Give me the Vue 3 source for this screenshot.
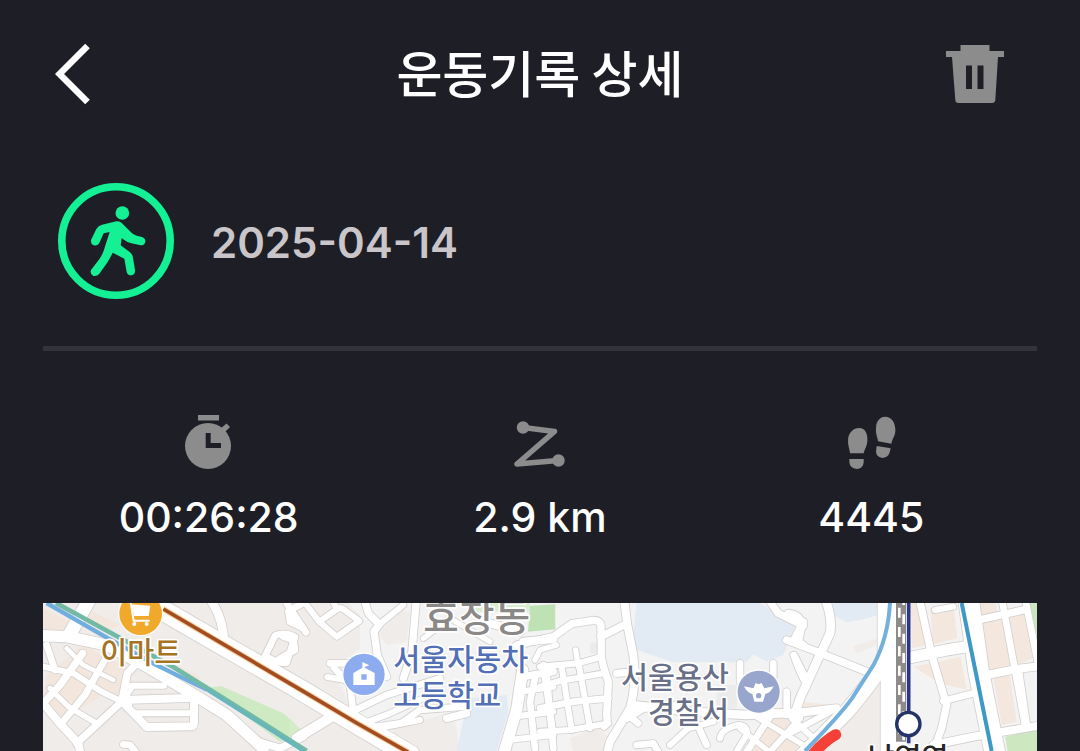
<template>
  <main class="page">
    <header class="header">
      <button class="icon-button back" type="button" aria-label="뒤로">
        <svg width="36" height="62" viewBox="0 0 36 62">
          <path d="M32.500 3L4.500 31L32.500 59" fill="none" stroke="#fff" stroke-width="6.500" />
        </svg>
      </button>
      <h1 class="title">운동기록 상세</h1>
      <button class="icon-button delete" type="button" aria-label="삭제">
        <svg width="58" height="58" viewBox="0 0 58 58">
          <path
            fill="#8c8c8c"
            fill-rule="evenodd"
            d="M14.500 0H43.500V6H58V12H52L49.300 55Q49 58 46 58H12.500Q9.500 58 9.300 55L6 12H0V6H14.500ZM20 20.500V44H26V20.500ZM31.500 20.500V44H37.500V20.500Z"
          />
        </svg>
      </button>
    </header>

    <section class="summary">
      <svg class="activity" width="116" height="116" viewBox="0 0 116 116">
        <circle cx="58" cy="58" r="54.200" fill="none" stroke="#14f195" stroke-width="7.600" />
        <g transform="translate(-18 -13) scale(0.33333)" fill="#14f195">
          <circle cx="247" cy="129" r="20.500" />
          <path
            d="M186 164L229 154Q239 152 246 160L273 187Q280 195 290 197L306 201Q317 205 316 215Q314 226 302 226L274 220Q261 217 253 210L245 204L242 226L269 246Q278 253 279 264L285 300Q286 313 275 316Q263 317 260 306L253 266L218 248Q212 261 203 276L178 311Q171 320 160 318Q149 313 153 300L179 266Q187 254 191 242L209 186L191 190L179 217Q173 229 161 226Q151 222 153 210L169 177Q175 167 186 164Z"
          />
        </g>
      </svg>
      <time class="date" datetime="2025-04-14">2025-04-14</time>
    </section>

    <hr class="divider" />

    <ul class="stats">
      <li class="stat">
        <svg width="54" height="54" viewBox="0 0 54 54">
          <g fill="#8c8c8c">
            <path d="M16 0H37V5.500H16Z" />
            <circle cx="26" cy="31" r="23" />
            <path d="M38 14L44.500 8.500L48 12L42 18Z" />
          </g>
          <path d="M26.200 18V30.500H39" fill="none" stroke="#1e1e26" stroke-width="5" />
        </svg>
        <span class="value">00:26:28</span>
      </li>
      <li class="stat">
        <svg width="54" height="54" viewBox="0 0 54 54">
          <path
            d="M10 12.500L41.500 16.500L4 49L45 45.500"
            fill="none"
            stroke="#8c8c8c"
            stroke-width="5.500"
            stroke-linecap="round"
            stroke-linejoin="round"
          />
          <circle cx="10" cy="12.500" r="6.200" fill="#8c8c8c" />
          <circle cx="45.500" cy="45.500" r="6.200" fill="#8c8c8c" />
        </svg>
        <span class="value">2.9 km</span>
      </li>
      <li class="stat">
        <svg width="54" height="54" viewBox="0 0 54 54">
          <g fill="#8c8c8c" transform="translate(-44.300 -15) scale(0.33333)">
            <path d="M151 160C149 144 144 135 145 119C146 98 161 84 179 84C196 84 204 100 203 123C202 139 195 146 192 160Z" />
            <path d="M149 177H192V187Q190 207 171 207Q151 206 149 187Z" />
            <path d="M235 124C234 111 227 103 229 83C230 62 241 50 256 50C275 50 287 67 287 91C287 109 278 115 275 131Z" />
            <path d="M231 138L273 145L270 157Q265 174 247 174Q229 171 229 154Z" />
          </g>
        </svg>
        <span class="value">4445</span>
      </li>
    </ul>

    <svg class="map" viewBox="9 24 2982 444" role="img" aria-label="운동 경로 지도">
      <rect x="0" y="0" width="3000" height="480" fill="#f4f3f3" />

      <path v-for="(area, i) in areas" :key="'area-' + i" :d="area.d" :fill="area.fill" />

      <!-- Road casings go under every road surface so that junctions stay open -->
      <g v-for="(block, i) in blocks" :key="'casing-' + i" :transform="`translate(${block.x} 0)`">
        <path
          v-for="(road, j) in block.roads"
          :key="j"
          class="casing"
          :d="road[1]"
          :stroke-width="road[0] + 5"
        />
      </g>
      <g v-for="(block, i) in blocks" :key="'road-' + i" :transform="`translate(${block.x} 0)`">
        <path
          v-for="(road, j) in block.roads"
          :key="j"
          class="road"
          :d="road[1]"
          :stroke-width="road[0]"
        />
      </g>

      <!-- Railways and subway lines -->
      <g fill="none">
        <path d="M20 24L190 122L345 208L500 284" stroke="#71aee0" stroke-width="13" />
        <path d="M48 24L235 126L400 216L500 278L640 366L800 468" stroke="#72b9a6" stroke-width="14" />
        <path d="M500 284L640 372L790 468" stroke="#67b5bd" stroke-width="10" />
        <path d="M370 42L790 289L950 384L1105 472" stroke="#f4ce9f" stroke-width="17" />
        <path d="M370 42L790 289L950 384L1105 472" stroke="#a34c20" stroke-width="11" />
        <path d="M2550 24Q2544 130 2500 211L2436 310Q2400 360 2295 468" stroke="#73b0dc" stroke-width="12" />
        <path d="M2765 24L2855 468" stroke="#3f98c7" stroke-width="12" />
        <path d="M2583 24V440" stroke="#8f8b88" stroke-width="30" />
        <path d="M2578 24V440" stroke="#fff" stroke-width="8" stroke-dasharray="30 28" stroke-dashoffset="44" />
        <path d="M2591 24V440" stroke="#fff" stroke-width="8" stroke-dasharray="30 28" stroke-dashoffset="24" />
        <path d="M2606 24V445" stroke="#2b3785" stroke-width="11" />
        <circle cx="2605" cy="387" r="35" fill="#fff" stroke="#243469" stroke-width="10" />
        <path d="M2387 419Q2355 437 2318 478" stroke="#f44138" stroke-width="33" stroke-linecap="round" />
      </g>

      <!-- Mart -->
      <circle cx="302" cy="56" r="68" fill="#fff" opacity="0.8" />
      <circle cx="302" cy="56" r="64" fill="#f0a92b" />
      <path d="M274 28L331 32L326 63H282Z" fill="#fff" />
      <path d="M262 22H272L281 77H329" fill="none" stroke="#fff" stroke-width="6" />
      <circle cx="283" cy="87" r="6" fill="#fff" />
      <circle cx="320" cy="87" r="6" fill="#fff" />

      <!-- School -->
      <circle cx="972" cy="238" r="66" fill="#fff" opacity="0.8" />
      <circle cx="972" cy="238" r="62" fill="#8dacf0" />
      <path d="M940 270V234L967 218V201L988 211L974 216V218L1004 234V270ZM964 238V254H980V238Z" fill="#fff" fill-rule="evenodd" />

      <!-- Police station -->
      <circle cx="2156" cy="290" r="67" fill="#fff" opacity="0.8" />
      <circle cx="2156" cy="290" r="63" fill="#98a5cc" />
      <path d="M2112 274L2140 280L2147 264L2156 268L2165 264L2173 280L2201 274Q2192 294 2176 297L2169 320H2143L2137 297Q2120 293 2112 274Z" fill="#fff" />
      <circle cx="2156" cy="302" r="8" fill="#98a5cc" />

      <text class="place mart" x="181" y="205">이마트</text>
      <text class="place town" x="1150" y="107">효창동</text>
      <text class="place school" x="1060" y="225">서울자동차</text>
      <text class="place school" x="1060" y="333">고등학교</text>
      <text class="place police" x="2067" y="278" text-anchor="end">서울용산</text>
      <text class="place police" x="2067" y="384" text-anchor="end">경찰서</text>
      <text class="place station" x="2604" y="523" text-anchor="middle">남영역</text>
    </svg>
  </main>
</template>

<script setup>
const areas = [
  { fill: '#f0ecea', d: 'M0 0H900L960 60V160L880 220L950 384L1100 480H0Z' },
  { fill: '#f3e7dd', d: 'M9 40L110 90L70 130L9 110ZM150 45L240 90L210 105L140 75Z' },
  { fill: '#f3e7dd', d: 'M20 240L130 150L260 220L240 320L190 300L70 370L10 310ZM370 190L490 250L460 255L390 220Z' },
  { fill: '#cdeac3', d: 'M495 278L545 274L730 355L790 410L720 440L640 380Z' },
  { fill: '#d4ecc8', d: 'M750 370L800 430L750 425Z' },
  { fill: '#f0ecea', d: 'M1010 110L1060 40L1110 50L1100 140L1040 150ZM1060 400L1240 350L1260 468H1060Z' },
  { fill: '#e2ebf3', d: 'M1284 310L1400 300L1405 350L1370 468H1250Z' },
  { fill: '#f0ecea', d: 'M1590 430L1670 395L1710 430L1700 468H1600Z' },
  { fill: '#bfe2b5', d: 'M1470 32L1546 28V103L1464 110Z' },
  { fill: '#d9edd0', d: 'M1300 24H1470V50H1300Z' },
  { fill: '#e2ebf3', d: 'M1790 24H2160L2267 90L2230 180L2180 200L2140 178L2120 202H1900L1775 160Z' },
  { fill: '#e2ebf3', d: 'M2380 24H2516V60L2460 75L2420 82L2380 60Z' },
  { fill: '#ebebec', d: 'M2030 270H2090V340H2030ZM1650 145H1680V175H1650Z' },
  { fill: '#f0ecea', d: 'M2450 310L2520 270V468H2330ZM2440 155L2510 130V150L2450 175Z' },
  { fill: '#f4e8de', d: 'M2180 350L2240 345L2280 468H2140ZM2290 320L2380 330L2360 370L2260 360Z' },
  { fill: '#f4e8de', d: 'M2612 24H2650L2660 150L2616 160ZM2670 40L2740 24L2752 130L2680 148ZM2620 215L2762 185L2780 285L2700 265Z' },
  { fill: '#f4e8de', d: 'M2810 24H2870V50L2820 60ZM2820 80L2885 65L2910 210L2850 230ZM2905 60L2950 50L2978 190L2935 210ZM2860 250L2910 240L2930 380L2885 390Z' },
  { fill: '#cde7c1', d: 'M2960 24H3000V150ZM2895 425L3000 400V480H2905Z' }
]

// Each road is [surface width, path]; x shifts a whole block to the right
const blocks = [
  {
    x: 0,
    roads: [
      [60, 'M330 24L560 157L780 283L960 392L1110 480'],
      [40, 'M150 10L88 120'],
      [34, 'M0 122L80 125L200 150L330 220L480 310L560 360L670 460'],
      [26, 'M514 18Q552 75 552 150'],
      [20, 'M705 122Q735 110 765 126L740 202Q730 212 675 184Z'],
      [20, 'M790 24L745 48L750 80L790 100'],
      [22, 'M655 440L720 460L790 425'],
      [22, 'M5 330L60 270L128 175'],
      [20, 'M62 388L135 300L200 185'],
      [22, 'M110 445L245 320L262 235L290 205'],
      [18, 'M10 215L100 235L185 290L245 320'],
      [24, 'M5 320L62 388L115 445L122 480'],
      [16, 'M30 280L85 335L170 385'],
      [14, 'M80 160L130 210L220 255'],
      [20, 'M20 150L45 225'],
      [18, 'M262 272H372'],
      [24, 'M244 315L470 308'],
      [18, 'M290 355L465 355'],
      [24, 'M248 322L320 396L452 394Q462 394 462 380V310'],
      [20, 'M250 448L270 450L295 480'],
      [14, 'M282 270L262 300L270 330']
    ]
  },
  {
    x: 750,
    roads: [
      [20, 'M-10 25L48 112'],
      [18, 'M88 80L142 42Q152 36 162 44L208 78L140 125Z'],
      [18, 'M88 80L45 24'],
      [18, 'M140 42L130 20'],
      [20, 'M-30 190L15 165L10 135L-20 125'],
      [22, 'M225 20L235 55L268 88L252 110L262 180L290 245'],
      [18, 'M268 88L340 30'],
      [22, 'M378 24L366 170L340 250'],
      [20, 'M120 205H210'],
      [18, 'M112 246L195 260'],
      [20, 'M132 218L180 270L192 370'],
      [20, 'M190 348L290 300L450 250'],
      [18, 'M235 380L300 355L410 305'],
      [20, 'M230 400L335 384L390 345L520 335'],
      [30, 'M20 430L125 365'],
      [18, 'M290 395L390 375'],
      [22, 'M470 370L530 355'],
      [24, 'M600 85L690 110'],
      [16, 'M400 130L480 70L600 140'],
      [34, 'M698 225L680 345L640 480'],
      [24, 'M700 140L790 132'],
      [22, 'M700 245L790 230'],
      [16, 'M735 195L750 165L800 150'],
      [18, 'M690 290L790 275'],
      [18, 'M670 365L790 350'],
      [18, 'M655 435L790 420'],
      [20, 'M735 250L720 320L735 460'],
      [20, 'M770 240L790 460']
    ]
  },
  {
    x: 1500,
    roads: [
      [22, 'M-70 150L40 125L95 86L160 76Q185 76 183 100L184 165Q180 190 205 260L200 360Q205 388 192 394'],
      [24, 'M252 10L262 90L280 180Q290 270 270 340L210 440L200 480'],
      [22, 'M183 125L262 85'],
      [16, 'M107 165L115 215'],
      [18, 'M0 215L115 205L185 185'],
      [18, 'M0 275L60 258L190 235'],
      [20, 'M0 340L100 320L205 310'],
      [18, 'M0 410L90 405L205 385'],
      [20, 'M10 210L38 410'],
      [18, 'M65 215L95 405'],
      [18, 'M115 200L150 400'],
      [22, 'M230 235L290 230'],
      [22, 'M260 370L310 340L420 330'],
      [20, 'M270 365L295 385'],
      [18, 'M540 430Q545 400 595 390Q625 390 620 420L590 468'],
      [26, 'M275 330L450 350L620 360L790 352'],
      [18, 'M390 450L445 400L520 380'],
      [20, 'M475 395L500 450'],
      [20, 'M290 450L340 445L360 480'],
      [20, 'M600 205V260'],
      [20, 'M700 205V245'],
      [20, 'M740 290V350'],
      [22, 'M690 20L715 55L790 92'],
      [22, 'M790 80L762 135L790 150'],
      [18, 'M760 180Q780 240 800 270'],
      [20, 'M620 470L700 350'],
      [18, 'M690 470L780 370'],
      [16, 'M640 360L790 450'],
      [16, 'M600 400L700 480']
    ]
  },
  {
    x: 2250,
    roads: [
      [26, 'M105 10Q128 70 120 115L85 190L30 310L10 370'],
      [22, 'M-10 135L80 170L255 240'],
      [22, 'M-5 55Q35 60 35 95L25 140'],
      [20, 'M12 180L50 255'],
      [24, 'M-10 358L140 340'],
      [18, 'M0 415L130 345'],
      [18, 'M10 375L60 420'],
      [46, 'M286 10V190Q270 230 170 350L30 490'],
      [44, 'M294 20V480'],
      [40, 'M335 20V480'],
      [34, 'M360 188L470 165L530 155'],
      [22, 'M390 20L425 180L470 330L455 400L440 440'],
      [18, 'M435 45L490 35'],
      [62, 'M536 15L566 230L616 480'],
      [20, 'M460 318L550 295'],
      [24, 'M430 450L550 425L760 390'],
      [22, 'M565 75L700 45'],
      [20, 'M635 10L675 225L705 390'],
      [20, 'M705 10L745 210'],
      [24, 'M590 240L680 222L760 212'],
      [14, 'M690 230L715 400']
    ]
  }
]
</script>

<style>
body {
  margin: 0;
  background: #1e1e26;
}
</style>

<style scoped>
.page {
  color: #fff;
  font-family: Inter, 'Noto Sans CJK KR', sans-serif;
}

.header {
  display: grid;
  grid-template-columns: 1fr auto 1fr;
  align-items: center;
  height: 147px;
  padding: 0 55px;
}

.icon-button {
  display: flex;
  padding: 0;
  border: 0;
  background: none;
  cursor: pointer;
}

.delete {
  justify-self: end;
  padding-right: 21px;
}

.title {
  margin: 0;
  padding-bottom: 6px;
  font-family: 'Noto Sans CJK KR', sans-serif;
  font-size: 50px;
  font-weight: 500;
  line-height: 72px;
}

.summary {
  display: flex;
  align-items: center;
  gap: 37px;
  padding: 36px 58px 47px;
}

.date {
  padding-top: 4px;
  color: #c9c5c9;
  font-size: 42px;
  font-weight: 600;
  line-height: 52px;
}

.divider {
  height: 5px;
  margin: 0 43px;
  border: 0;
  background: #33333d;
}

.stats {
  display: grid;
  grid-template-columns: repeat(3, 1fr);
  margin: 0;
  padding: 64px 43px 60px;
  list-style: none;
}

.stat {
  display: flex;
  flex-direction: column;
  align-items: center;
  gap: 22px;
}

.value {
  font-size: 41px;
  font-weight: 500;
  line-height: 52px;
}

.map {
  display: block;
  width: calc(100% - 86px);
  margin: 0 43px;
  overflow: hidden;
}

.casing {
  fill: none;
  stroke: #d2d0ce;
  stroke-linecap: round;
  stroke-linejoin: round;
}

.road {
  fill: none;
  stroke: #fff;
  stroke-linecap: round;
  stroke-linejoin: round;
}

.place {
  font-family: 'Noto Sans CJK KR', sans-serif;
  font-size: 88px;
  font-weight: 500;
  paint-order: stroke;
  stroke: #fff;
  stroke-width: 10px;
  stroke-linejoin: round;
}

.mart {
  fill: #a67322;
}

.town {
  fill: #8b8987;
  font-size: 116px;
}

.school {
  fill: #536fb5;
}

.police {
  fill: #697087;
}

.station {
  fill: #252525;
}
</style>
